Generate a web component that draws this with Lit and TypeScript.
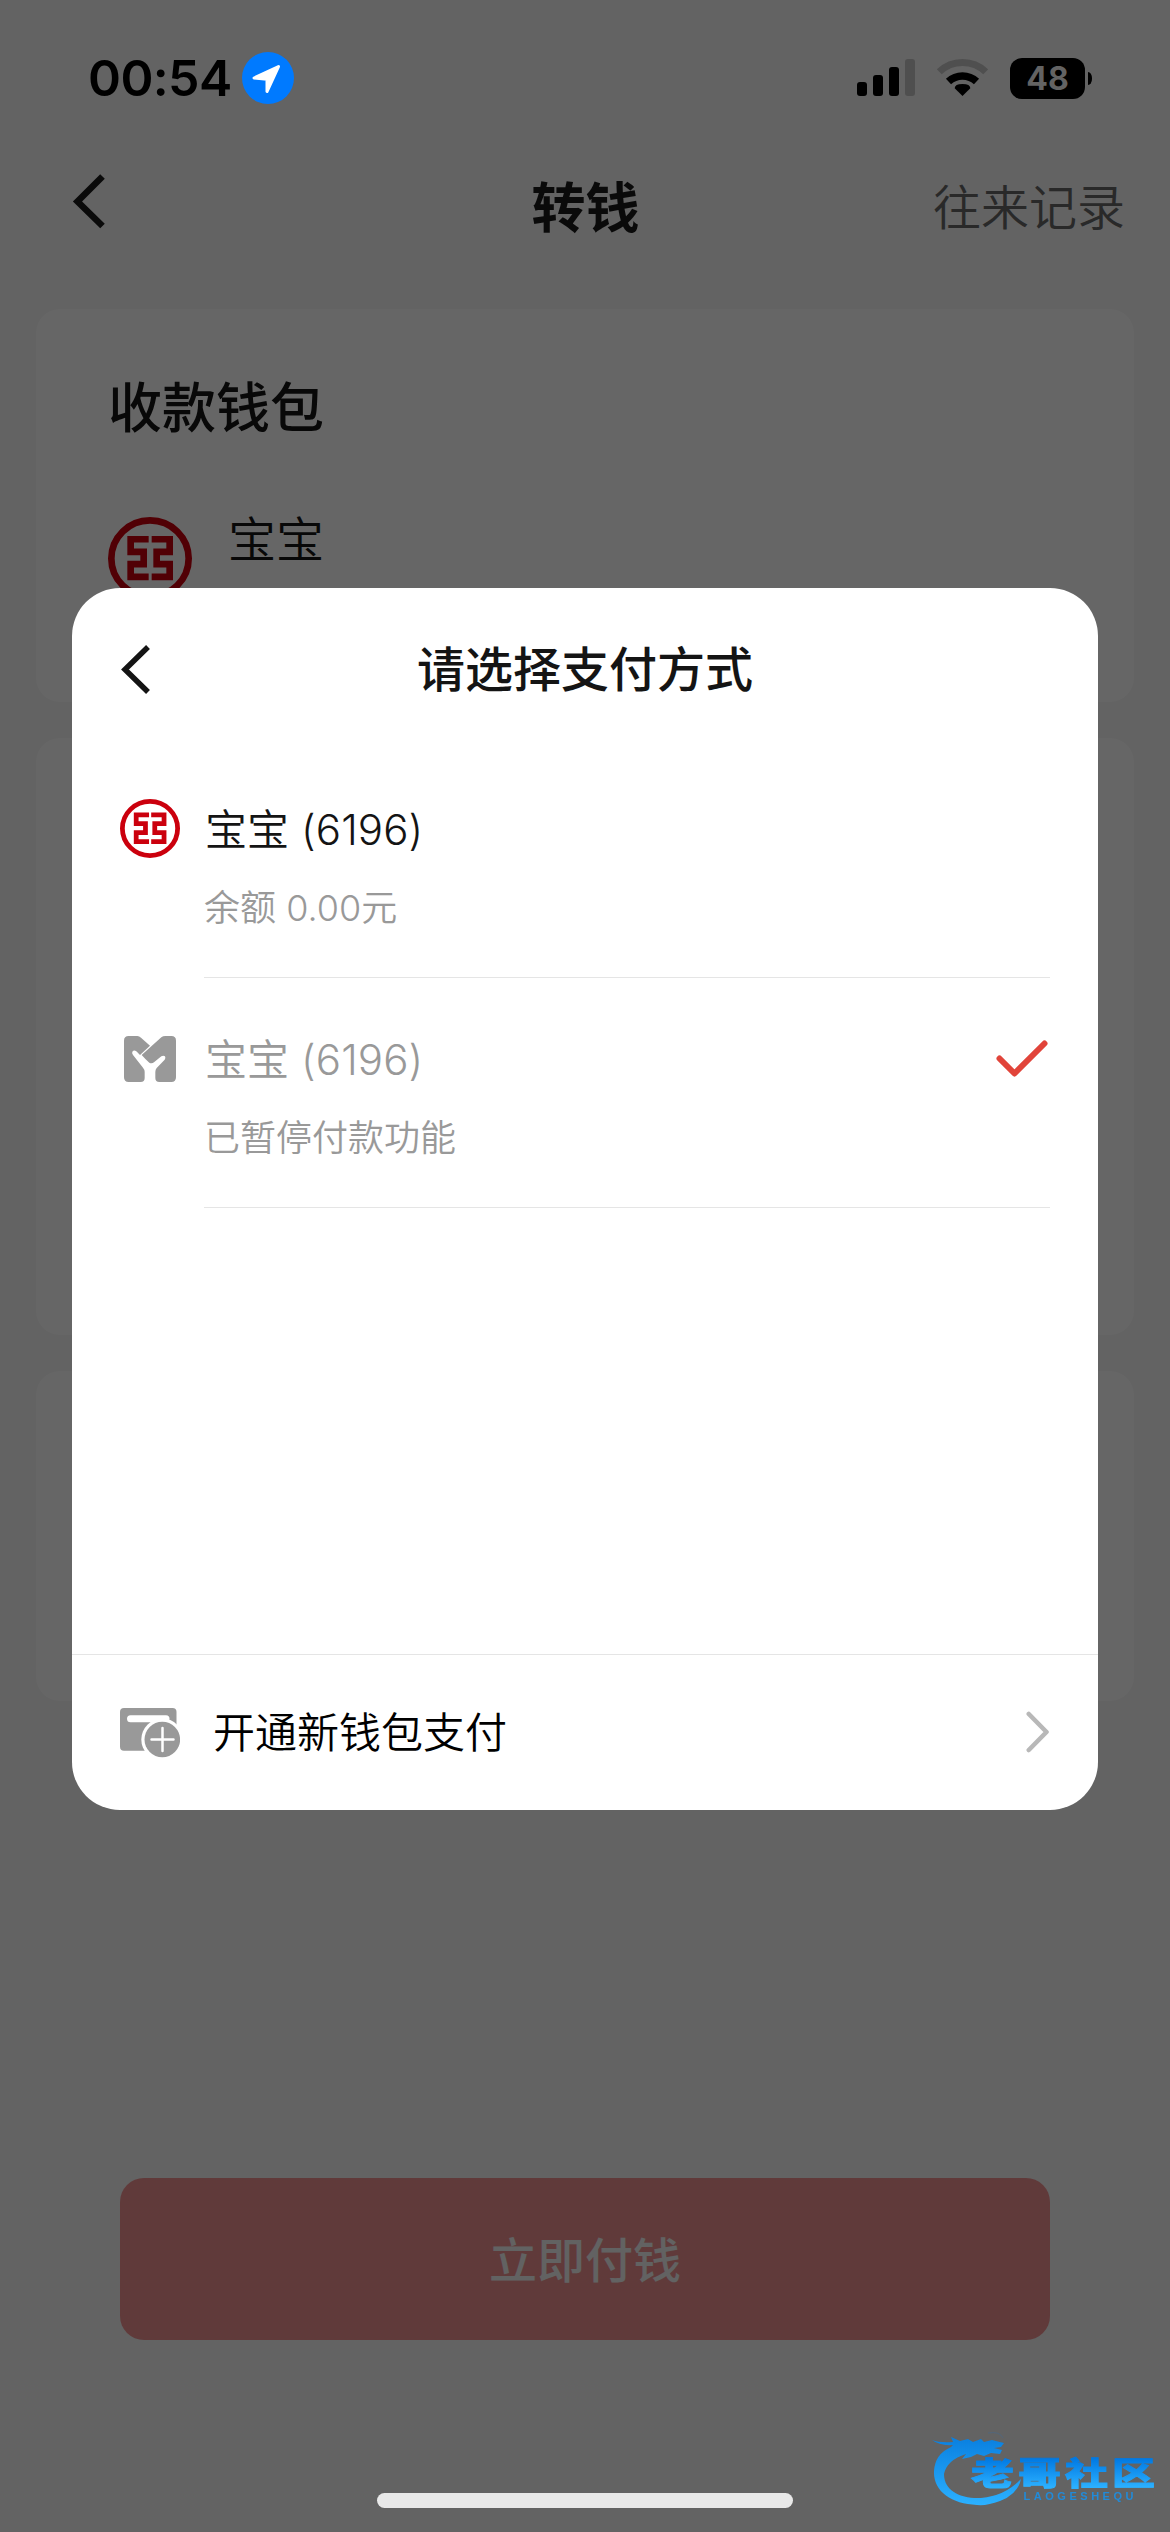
import { LitElement, html, css, svg } from "lit";
import { customElement, property } from "lit/decorators.js";

@customElement("bank-logo")
class BankLogo extends LitElement {
  static styles = css`
    :host { display: block; }
    .mark { display: block; width: 100%; height: 100%; }
  `;
  render() {
    return html`<svg class="mark" viewBox="0 0 252 248" preserveAspectRatio="none" fill="none" stroke="#cb000d">
      <ellipse cx="126" cy="124" rx="116" ry="114" stroke-width="20" />
      <path d="M122 66.500H68V104H107V141H68V179H122M131 66.500H185V104H146V141H185V179H131" stroke-width="20" />
    </svg>`;
  }
}

@customElement("status-bar")
class StatusBar extends LitElement {
  static styles = css`
    :host { display: flex; height: 156px; box-sizing: border-box; padding: 48px 78px 0 88px; align-items: flex-start; justify-content: space-between; }
    .left { display: flex; align-items: center; height: 60px; }
    .time { font: 600 50px/60px "Inter", sans-serif; color: #000; width: 154px; white-space: nowrap; letter-spacing: -0.6px; }
    .pin { display: block; width: 52px; height: 52px; }
    .right { display: flex; align-items: center; height: 60px; }
    .icons { display: block; }
    .battery { display: flex; align-items: center; justify-content: center; width: 75px; height: 41px; border-radius: 12px; background: #000; color: #636363; font: 700 32px/41px "Inter", sans-serif; margin-left: 22px; }
    .nub { width: 4px; height: 13px; margin-left: 3px; background: #000; border-radius: 0 4px 4px 0 / 0 6px 6px 0; }
  `;
  render() {
    return html`
      <div class="left">
        <div class="time">00:54</div>
        <svg class="pin" viewBox="0 0 52 52">
          <circle cx="26" cy="26" r="26" fill="#007aff" />
          <path d="M12 26L36.500 14.500L25 39.500V27.300Z" fill="#fff" stroke="#fff" stroke-width="3" stroke-linejoin="round" />
        </svg>
      </div>
      <div class="right">
        <svg class="icons" width="131" height="40" viewBox="856 58 131 40">
          <rect x="856" y="82" width="10" height="14" rx="3" />
          <rect x="872" y="75" width="10" height="21" rx="3" />
          <rect x="888" y="67" width="10" height="29" rx="3" />
          <rect x="904" y="59" width="10" height="37" rx="3" fill="#4f4f4f" />
          <path d="M938.300 71.800A33.500 33.500 0 0 1 984.700 71.800" fill="none" stroke="#4f4f4f" stroke-width="7" />
          <path d="M947.500 81.500A20.500 20.500 0 0 1 975.500 81.500" fill="none" stroke="#000" stroke-width="7.500" />
          <path d="M961.500 96L953.700 88.300Q953.700 84 961.500 84Q969.300 84 969.300 88.300Z" />
        </svg>
        <div class="battery">48</div>
        <div class="nub"></div>
      </div>`;
  }
}

@customElement("pay-option")
class PayOption extends LitElement {
  @property() name = "";
  @property() detail = "";
  @property({ type: Boolean, reflect: true }) disabled = false;
  @property({ type: Boolean }) checked = false;
  static styles = css`
    :host { display: grid; grid-template-columns: 84px 1fr; height: 230px; padding: 0 48px; color: #141414; }
    :host([disabled]) { color: #999; }
    .icon { padding-top: 51px; }
    .bank { width: 60px; height: 59px; }
    .wallet { display: block; width: 52px; height: 46px; margin: 7px 0 0 4px; }
    .body { display: flex; justify-content: space-between; border-bottom: 1px solid #e5e5e5; box-sizing: border-box; }
    .texts { padding: 52px 0 0 1px; }
    .name { font: 350 42px/60px "Inter", "Noto Sans CJK SC", sans-serif; white-space: pre; letter-spacing: 0.1px; }
    .detail { font: 350 36px/50px "Inter", "Noto Sans CJK SC", sans-serif; color: #999; margin-top: 23px; margin-left: -1px; }
    .tick { display: block; width: 52px; height: 37px; margin-top: 62px; margin-right: 2px; }
  `;
  render() {
    return html`
      <div class="icon">
        ${this.disabled
          ? html`<svg class="wallet" viewBox="0 0 156 138" fill="#999">
              <path d="M14 0H40Q46 0 51 5L78 29L48 57L37 46Q30 41 25 47Q23 51 27 57L57 95Q62 101 62 107V126Q62 138 50 138H14Q0 138 0 124V14Q0 0 14 0Z" />
              <path d="M142 0H124Q117 0 112 4L53 57Q66 72 76 80Q83 84 90 79L112 61Q118 57 123 61Q126 66 122 71L98 96Q94 101 94 108V126Q94 138 106 138H142Q156 138 156 124V14Q156 0 142 0Z" />
            </svg>`
          : html`<bank-logo class="bank"></bank-logo>`}
      </div>
      <div class="body">
        <div class="texts">
          <div class="name">${this.name}</div>
          <div class="detail">${this.detail}</div>
        </div>
        ${this.checked
          ? html`<svg class="tick" viewBox="0 0 52 37"><path d="M3.500 18.500L18.500 33.500L48.500 3.500" fill="none" stroke="#e1443a" stroke-width="6" stroke-linecap="round" stroke-linejoin="round" /></svg>`
          : null}
      </div>`;
  }
}

@customElement("community-mark")
class CommunityMark extends LitElement {
  static styles = css`
    :host { display: block; }
    .mark { display: block; filter: blur(0.5px); }
    .cn { font-family: "Noto Sans CJK SC", sans-serif; font-weight: 900; font-size: 43px; }
    .en { font-family: "Liberation Sans", sans-serif; font-size: 11px; font-weight: 700; }
  `;
  render() {
    return html`<svg class="mark" width="230" height="84" viewBox="928 2428 230 84">
      <defs>
        <linearGradient id="g" gradientUnits="userSpaceOnUse" x1="0" y1="2438" x2="0" y2="2504">
          <stop offset="0" stop-color="#0a80e0" /><stop offset="1" stop-color="#2bb0ff" />
        </linearGradient>
        <linearGradient id="t" gradientUnits="userSpaceOnUse" x1="0" y1="3" x2="0" y2="42">
          <stop offset="0" stop-color="#0078e2" /><stop offset="1" stop-color="#2bb0ff" />
        </linearGradient>
      </defs>
      ${svg`
      <path fill="url(#g)" d="M932 2440Q940 2443 953 2442L951 2437L960 2441L968 2439L973 2442L981 2439L984 2442L992 2440L1004 2443L1001 2447L994 2448L1002 2450L1000 2454L991 2453L984 2456L977 2454L971 2457L962 2459L966 2454Q947 2460 944 2474C944 2491 961 2499 981 2498Q1005 2496 1021 2479Q1018 2494 1000 2501Q987 2506 977 2505C951 2504 933 2491 934 2471Q935 2454 951 2447L953 2445Q940 2446 932 2440Z" />
      <path d="M988 2433Q1000 2431 1003 2438" fill="none" stroke="#3b6f9f" stroke-width="0.800" opacity="0.5" />`}
      <g transform="translate(971 2456) scale(1 0.740)"><text class="cn" x="0" y="39" textLength="184" fill="url(#t)" stroke="url(#t)" stroke-width="1.200">老哥社区</text></g>
      <text class="en" x="1023.500" y="2499.500" textLength="110" fill="#218bd9">LAOGESHEQU</text>
    </svg>`;
  }
}

@customElement("app-root")
class AppRoot extends LitElement {
  static styles = css`
    :host { display: block; position: relative; width: 1170px; height: 2532px; overflow: hidden; background: #f7f7f7; font-family: "Noto Sans CJK SC", sans-serif; }
    .page { display: flex; flex-direction: column; height: 2532px; }
    .status { position: relative; z-index: 2; flex: none; }
    .nav { display: grid; grid-template-columns: 1fr 110px 1fr; height: 153px; flex: none; box-sizing: border-box; padding: 9px 45px 0 70px; }
    .nav-title { font: 700 54px/80px "Noto Sans CJK SC", sans-serif; color: #1a1a1a; text-align: center; transform: translateX(-12px); }
    .nav-link { font-size: 48px; font-weight: 350; line-height: 76px; color: #666; text-align: right; padding-top: 1px; }
    .back { display: block; width: 36px; height: 56px; margin-top: 8px; }
    .cards { display: flex; flex-direction: column; gap: 36px; padding: 0 36px; flex: none; }
    .card { background: #fff; border-radius: 24px; box-sizing: border-box; padding: 61px 72px 0; }
    .payee { height: 393px; }
    .form { height: 597px; }
    .notes { height: 330px; }
    .card-title { font-size: 54px; font-weight: 500; line-height: 70px; color: #141414; }
    .wallet-row { display: flex; gap: 36px; margin-top: 77px; }
    .payee-logo { width: 84px; height: 83px; }
    .payee-name { font-size: 48px; font-weight: 350; line-height: 60px; color: #141414; margin-top: -11px; }
    .pay { flex: none; margin: 477px 120px 0; height: 162px; border-radius: 24px; box-sizing: border-box; padding-bottom: 5px; background: #f09292; color: #f4f5f5; display: flex; align-items: center; justify-content: center; font-size: 48px; font-weight: 500; line-height: 72px; }
    .scrim { position: absolute; inset: 0; background: rgba(0, 0, 0, 0.6); z-index: 1; }
    .dialog { position: absolute; z-index: 3; left: 72px; top: 588px; width: 1026px; height: 1222px; background: #fff; border-radius: 48px; display: flex; flex-direction: column; overflow: hidden; }
    .dialog-head { display: grid; grid-template-columns: 80px 1fr 80px; padding: 0 48px; height: 160px; flex: none; align-items: center; }
    .dialog-back { display: block; width: 32px; height: 50px; margin-top: 1px; }
    .dialog-title { text-align: center; font-size: 48px; font-weight: 500; line-height: 72px; color: #141414; margin-top: -4px; }
    .options { flex: 1; }
    .add { display: flex; align-items: center; height: 156px; box-sizing: border-box; border-top: 1px solid #e5e5e5; padding: 0 48px; flex: none; }
    .add-icon { display: block; width: 60px; height: 50px; }
    .add-text { flex: 1; font-size: 42px; font-weight: 350; line-height: 60px; color: #000; margin-left: 33px; margin-top: -5px; }
    .chevron { display: block; width: 24px; height: 42px; margin-top: -1px; }
    .home { position: absolute; z-index: 3; left: 377px; top: 2493px; width: 416px; height: 15px; border-radius: 8px; background: #e9e9e9; }
    .watermark { position: absolute; z-index: 4; left: 928px; top: 2428px; }
  `;
  render() {
    return html`
      <div class="page">
        <status-bar class="status"></status-bar>
        <div class="nav">
          <svg class="back" viewBox="0 0 36 56"><path d="M32.500 3.500L7.500 28.500L32.500 53" fill="none" stroke="#1a1a1a" stroke-width="6.500" /></svg>
          <div class="nav-title">转钱</div>
          <div class="nav-link">往来记录</div>
        </div>
        <div class="cards">
          <section class="card payee">
            <div class="card-title">收款钱包</div>
            <div class="wallet-row">
              <bank-logo class="payee-logo"></bank-logo>
              <div class="payee-name">宝宝</div>
            </div>
          </section>
          <section class="card form"></section>
          <section class="card notes"></section>
        </div>
        <div class="pay">立即付钱</div>
      </div>
      <div class="scrim"></div>
      <div class="dialog">
        <div class="dialog-head">
          <svg class="dialog-back" viewBox="0 0 32 50"><path d="M28 3L5 25.500L28 48" fill="none" stroke="#141414" stroke-width="5.500" /></svg>
          <div class="dialog-title">请选择支付方式</div>
        </div>
        <div class="options">
          <pay-option name="宝宝 (6196)" detail="余额 0.00元"></pay-option>
          <pay-option name="宝宝 (6196)" detail="已暂停付款功能" disabled checked></pay-option>
        </div>
        <div class="add">
          <svg class="add-icon" viewBox="0 0 60 50">
            <rect width="56.500" height="42.700" rx="4" fill="#999" />
            <rect x="7" y="7.300" width="42.500" height="7" rx="3.500" fill="#fff" />
            <circle cx="42.300" cy="31.500" r="21" fill="#fff" />
            <circle cx="42.300" cy="31.500" r="17.800" fill="#999" />
            <path d="M31.500 31.500H53.500M42.500 20V43" stroke="#fff" stroke-width="2.500" stroke-linecap="round" />
          </svg>
          <div class="add-text">开通新钱包支付</div>
          <svg class="chevron" viewBox="0 0 24 42"><path d="M2.800 3L20.500 21L2.800 39" fill="none" stroke="#b8b8b8" stroke-width="4.600" stroke-linecap="round" stroke-linejoin="round" /></svg>
        </div>
      </div>
      <div class="home"></div>
      <community-mark class="watermark"></community-mark>`;
  }
}
